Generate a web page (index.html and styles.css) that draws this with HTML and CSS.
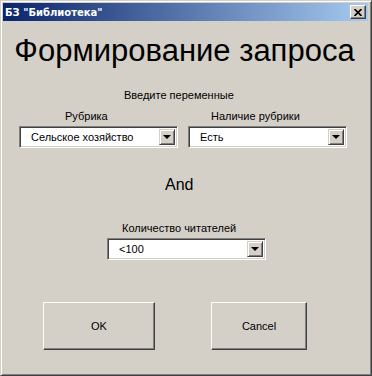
FILE: index.html
```html
<!DOCTYPE html>
<html lang="ru">
<head>
  <meta charset="UTF-8" />
  <title>БЗ "Библиотека"</title>
  <link rel="stylesheet" href="styles.css">
</head>
<body>
  <div class="window">
    <div class="titlebar">
      <span class="title">БЗ "Библиотека"</span>
      <span class="close">
        <svg width="8" height="7" viewBox="0 0 8 7"><path d="M0.5 0 L7.5 7 M7.5 0 L0.5 7" stroke="#000" stroke-width="1.7" fill="none"/></svg>
      </span>
    </div>

    <div class="content">
      <h1 class="heading">Формирование запроса</h1>
      <p class="hint">Введите переменные</p>

      <div class="pair">
        <div class="field">
          <label class="label label-rubric">Рубрика</label>
          <div class="combo">
            <span class="combo-text">Сельское хозяйство</span>
            <span class="combo-btn"><i class="arrow"></i></span>
          </div>
        </div>
        <div class="field">
          <label class="label label-has">Наличие рубрики</label>
          <div class="combo">
            <span class="combo-text">Есть</span>
            <span class="combo-btn"><i class="arrow"></i></span>
          </div>
        </div>
      </div>

      <p class="and">And</p>

      <div class="field field-readers">
        <label class="label label-readers">Количество читателей</label>
        <div class="combo">
          <span class="combo-text">&lt;100</span>
          <span class="combo-btn"><i class="arrow"></i></span>
        </div>
      </div>

      <div class="buttons">
        <button class="btn btn-ok">OK</button>
        <button class="btn btn-cancel">Cancel</button>
      </div>
    </div>
  </div>
</body>
</html>
```

FILE: styles.css
```css
body {
  margin: 0;
  font-family: "Liberation Sans", Arial, sans-serif;
  font-size: 11px;
  color: #000;
  background: #d4d0c8;
}
.window {
  width: 372px;
  height: 376px;
  box-sizing: border-box;
  background: #d4d0c8;
  border: 1px solid;
  border-color: #d4d0c8 #404040 #404040 #d4d0c8;
  box-shadow: inset 1px 1px 0 #fff, inset -1px -1px 0 #808080;
  padding: 2px 3px 3px 2px;
  display: flex;
  flex-direction: column;
}
.titlebar {
  height: 18px;
  background: linear-gradient(to right, #0a246a, #a6caf0);
  display: flex;
  align-items: center;
  justify-content: space-between;
  padding: 0 2px 0 2px;
}
.title {
  color: #fff;
  font-weight: bold;
  font-size: 10px;
  font-family: "DejaVu Sans", sans-serif;
}
.close {
  width: 14px;
  height: 12px;
  background: #d4d0c8;
  border: 1px solid;
  border-color: #fff #404040 #404040 #fff;
  box-shadow: inset -1px -1px 0 #808080;
  display: flex;
  align-items: center;
  justify-content: center;
}
.content {
  flex: 1;
  padding: 0 0 0 16px;
}
.heading {
  margin: 12px 0 0 -7px;
  font-weight: normal;
  font-size: 31px;
  line-height: 36px;
  width: 345px;
  text-align: center;
}
.hint {
  margin: 19px 0 0 105px;
  line-height: 14px;
}
.pair {
  display: flex;
  gap: 10px;
  margin-top: 7px;
}
.field {
  display: flex;
  flex-direction: column;
  width: 159px;
}
.label {
  line-height: 14px;
  margin-bottom: 3px;
}
.label-rubric { margin-left: 46px; }
.label-has { margin-left: 23px; }
.label-readers { margin-left: 15px; }
.combo {
  height: 22px;
  box-sizing: border-box;
  background: #fff;
  border: 1px solid;
  border-color: #808080 #fff #fff #808080;
  box-shadow: inset 1px 1px 0 #404040, inset -1px -1px 0 #d4d0c8;
  padding: 2px;
  display: flex;
  align-items: center;
}
.combo-text {
  flex: 1;
  padding-left: 9px;
}
.combo-btn {
  width: 14px;
  height: 14px;
  background: #d4d0c8;
  border: 1px solid;
  border-color: #d4d0c8 #404040 #404040 #d4d0c8;
  box-shadow: inset 1px 1px 0 #fff, inset -1px -1px 0 #808080;
  display: flex;
  align-items: center;
  justify-content: center;
}
.arrow {
  width: 0;
  height: 0;
  border-left: 4px solid transparent;
  border-right: 4px solid transparent;
  border-top: 4px solid #000;
}
.and {
  margin: 28px 0 0 146px;
  font-size: 16px;
  line-height: 18px;
}
.field-readers {
  margin: 27px 0 0 88px;
}
.buttons {
  display: flex;
  margin: 42px 0 0 24px;
}
.btn {
  height: 48px;
  background: #d4d0c8;
  font-family: "Liberation Sans", Arial, sans-serif;
  font-size: 11px;
  color: #000;
  border: 1px solid;
  border-color: #fff #404040 #404040 #fff;
  box-shadow: inset -1px -1px 0 #808080;
  padding: 0;
}
.btn-ok { width: 112px; }
.btn-cancel { width: 96px; margin-left: 56px; }
```
